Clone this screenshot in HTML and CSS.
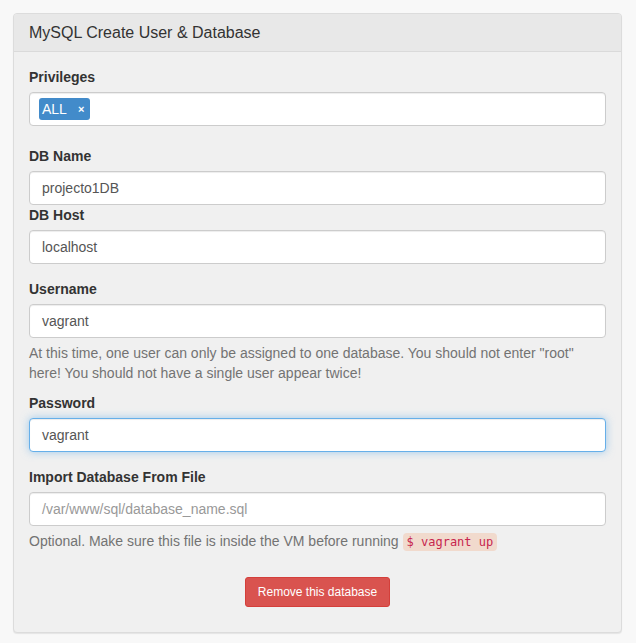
FILE: index.html
```html
<!DOCTYPE html>
<html>
<head>
<meta charset="utf-8">
<link rel="stylesheet" href="styles.css">
</head>
<body>
<div class="panel">
  <div class="panel-heading">MySQL Create User &amp; Database</div>
  <div class="panel-body">
    <div class="group group-priv">
      <label class="lbl">Privileges</label>
      <div class="control tags">
        <span class="tag">ALL <span class="tag-x">×</span></span>
      </div>
    </div>
    <div class="group group-tight">
      <label class="lbl">DB Name</label>
      <div class="control">projecto1DB</div>
    </div>
    <div class="group">
      <label class="lbl">DB Host</label>
      <div class="control">localhost</div>
    </div>
    <div class="group group-help">
      <label class="lbl">Username</label>
      <div class="control">vagrant</div>
      <p class="help">At this time, one user can only be assigned to one database. You should not enter "root" here! You should not have a single user appear twice!</p>
    </div>
    <div class="group">
      <label class="lbl">Password</label>
      <div class="control focus">vagrant</div>
    </div>
    <div class="group group-help">
      <label class="lbl">Import Database From File</label>
      <div class="control placeholder">/var/www/sql/database_name.sql</div>
      <p class="help">Optional. Make sure this file is inside the VM before running <code class="code">$ vagrant up</code></p>
    </div>
    <div class="actions">
      <button class="btn-danger">Remove this database</button>
    </div>
  </div>
</div>
</body>
</html>
```
FILE: styles.css
```css
html, body {
  margin: 0;
  padding: 0;
}
body {
  background: #f8f8f8;
  font-family: "Liberation Sans", Arial, sans-serif;
  font-size: 14px;
  line-height: 20px;
  color: #333;
  padding: 13px 14px 10px 13px;
}
.panel {
  background: #f0f0f0;
  border: 1px solid #dcdcdc;
  border-radius: 4px;
  box-shadow: 0 1px 1px rgba(0,0,0,0.08);
}
.panel-heading {
  background: #e8e8e8;
  border-bottom: 1px solid #dadada;
  border-radius: 3px 3px 0 0;
  padding: 10px 15px;
  font-size: 16px;
  line-height: 17px;
  color: #333;
}
.panel-body {
  padding: 15px 15px 25px;
}
.group {
  display: flex;
  flex-direction: column;
  margin-bottom: 15px;
}
.group-priv {
  margin-bottom: 20px;
}
.group-tight {
  margin-bottom: 0;
}
.group-help {
  margin-bottom: 10px;
}
.lbl {
  font-weight: bold;
  margin-bottom: 5px;
  display: block;
}
.control {
  height: 34px;
  box-sizing: border-box;
  padding: 6px 12px;
  background: #fff;
  border: 1px solid #ccc;
  border-radius: 4px;
  box-shadow: inset 0 1px 1px rgba(0,0,0,0.075);
  color: #555;
}
.control.focus {
  border-color: #66afe9;
  box-shadow: inset 0 1px 1px rgba(0,0,0,0.075), 0 0 8px rgba(102,175,233,0.6);
}
.control.placeholder {
  color: #999;
}
.tags {
  padding: 5px 9px;
  display: flex;
  align-items: center;
}
.tag {
  background: #428bca;
  color: #fff;
  border-radius: 3px;
  height: 22px;
  line-height: 22px;
  padding: 0 6px 0 3px;
  display: inline-flex;
  align-items: center;
  gap: 11px;
}
.tag-x {
  font-size: 11px;
  font-weight: bold;
}
.help {
  margin: 5px 0 0;
  color: #737373;
}
.code {
  font-family: "DejaVu Sans Mono", "Liberation Mono", monospace;
  font-size: 12px;
  color: #c7254e;
  background: #f1dacd;
  border-radius: 4px;
  padding: 2px 4px;
}
.actions {
  display: flex;
  justify-content: center;
  margin-top: 25px;
}
.btn-danger {
  font-family: "Liberation Sans", Arial, sans-serif;
  font-size: 12px;
  line-height: 18px;
  padding: 5px 12px;
  color: #fff;
  background: #d9534f;
  border: 1px solid #d43f3a;
  border-radius: 3px;
}
```
